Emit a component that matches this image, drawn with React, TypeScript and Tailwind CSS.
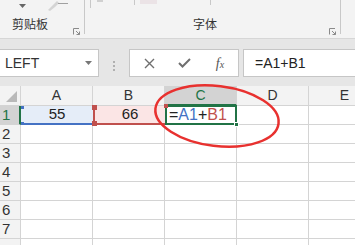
import React from "react";

const cols = ["A", "B", "C", "D", "E"];
const rows = [1, 2, 3, 4, 5, 6, 7, 8];

export default function App() {
  return (
    <div
      className="relative w-[355px] h-[245px] overflow-hidden bg-white"
      style={{ fontFamily: '"Liberation Sans", Arial, sans-serif' }}
    >
      {/* Ribbon */}
      <div className="relative flex h-[39px] bg-[#f3f3f3] border-b border-[#d6d6d6]">
        <div className="relative w-[85px] h-[34px] border-r border-[#c8c8c8] flex items-end pl-[12px] pb-[3px]">
          <span
            className="text-[12px] leading-[14px] text-[#333]"
            style={{ fontFamily: '"Noto Sans CJK SC", sans-serif' }}
          >
            剪贴板
          </span>
          <svg className="absolute left-[73px] top-[28px]" width="8" height="7" viewBox="0 0 8 7">
            <path d="M0.5 6.5V0.5H6" stroke="#8a8a8a" fill="none" />
            <path d="M3 3L6.5 6.5M6.5 3.5V6.5H3.5" stroke="#8a8a8a" fill="none" />
          </svg>
          <svg className="absolute left-[19px] top-[4px]" width="7" height="4" viewBox="0 0 7 4">
            <path d="M0 0H7L3.5 4Z" fill="#666" />
          </svg>
          <svg className="absolute left-[46px] top-[0px]" width="14" height="11" viewBox="0 0 14 11">
            <path d="M2 10L7 5L11 1L13 3L9 7L4 11Z" fill="#d4d4d4" />
          </svg>
        </div>
        <div className="relative w-[256px] h-[34px] border-r border-[#c8c8c8] flex items-end pl-[108px] pb-[3px]">
          <span
            className="text-[12px] leading-[14px] text-[#333]"
            style={{ fontFamily: '"Noto Sans CJK SC", sans-serif' }}
          >
            字体
          </span>
          <svg className="absolute left-[244px] top-[28px]" width="8" height="7" viewBox="0 0 8 7">
            <path d="M0.5 6.5V0.5H6" stroke="#8a8a8a" fill="none" />
            <path d="M3 3L6.5 6.5M6.5 3.5V6.5H3.5" stroke="#8a8a8a" fill="none" />
          </svg>
          <div className="absolute left-[-27px] top-0 w-[10px] h-[1px] bg-[#a0a0a0] mt-[3px]" />
          <div className="absolute left-[5px] top-0 w-[1px] h-[8px] bg-[#c8c8c8]" />
          <div className="absolute left-[49px] top-0 w-[1px] h-[5px] bg-[#c8c8c8]" />
          <div className="absolute left-[55px] top-0 w-[17px] h-[4px] bg-[#ebe3e6]" />
          <div className="absolute left-[125px] top-0 w-[1px] h-[5px] bg-[#c8c8c8]" />
          <div className="absolute left-[12px] top-0 w-[6px] h-[2px] bg-[#d0d0d0]" />
        </div>
      </div>

      {/* Formula bar */}
      <div className="flex h-[47px] bg-[#e6e6e6] pt-[10px]">
        <div className="relative w-[99px] h-[28px] bg-white border border-l-0 border-[#c6c6c6] flex items-center pl-[5px]">
          <span className="text-[14px] text-[#333]">LEFT</span>
          <svg className="absolute left-[85px] top-[11px]" width="7" height="4" viewBox="0 0 7 4">
            <path d="M0 0H7L3.5 4Z" fill="#777" />
          </svg>
        </div>
        <div className="w-[30px] flex flex-col items-center justify-center gap-[2px] pb-[4px]">
          <div className="w-[2px] h-[2px] bg-[#b0b0b0]" />
          <div className="w-[2px] h-[2px] bg-[#b0b0b0]" />
          <div className="w-[2px] h-[2px] bg-[#b0b0b0]" />
        </div>
        <div className="w-[110px] h-[28px] bg-white border border-[#c6c6c6] flex items-center">
          <div className="w-[36px] flex justify-center pl-[2px]">
            <svg width="11" height="11" viewBox="0 0 11 11">
              <path d="M1 1L10 10M10 1L1 10" stroke="#6f6f6f" strokeWidth="1.4" />
            </svg>
          </div>
          <div className="w-[36px] flex justify-center">
            <svg width="13" height="10" viewBox="0 0 13 10">
              <path d="M1 5L4.5 8.5L12 1" stroke="#6f6f6f" strokeWidth="2" fill="none" />
            </svg>
          </div>
          <div className="w-[36px] flex justify-center">
            <span
              className="italic text-[14px] text-[#555]"
              style={{ fontFamily: '"Liberation Serif", serif' }}
            >
              f<span className="text-[10px]">x</span>
            </span>
          </div>
        </div>
        <div className="ml-[4px] flex-1 h-[28px] bg-white border border-r-0 border-[#c6c6c6] flex items-center pl-[11px]">
          <span className="text-[14px] text-[#222]">=A1+B1</span>
        </div>
      </div>

      {/* Grid */}
      <div className="grid grid-cols-[21px_72px_72px_72px_72px_72px] grid-rows-[20px_repeat(8,19px)]">
        <div className="relative bg-[#f3f3f3] border-r border-b border-[#d4d4d4]">
          <svg className="absolute right-[3px] bottom-[3px]" width="11" height="11" viewBox="0 0 11 11">
            <path d="M11 0V11H0Z" fill="#b9b9b9" />
          </svg>
        </div>
        {cols.map((c) => (
          <div
            key={c}
            className={
              c === "C"
                ? "bg-[#d3d3d3] border-r border-[#d4d4d4] border-b-2 border-b-[#217346] flex items-center justify-center text-[14px] text-[#217346]"
                : "bg-[#f3f3f3] border-r border-b border-[#d4d4d4] flex items-center justify-center text-[14px] text-[#333]"
            }
          >
            {c}
          </div>
        ))}
        {rows.map((r) => (
          <React.Fragment key={r}>
            <div
              className={
                r === 1
                  ? "bg-[#d3d3d3] border-r-2 border-r-[#217346] border-b border-[#d4d4d4] flex items-center pl-[2px] text-[15px] text-[#217346]"
                  : "bg-[#f3f3f3] border-r border-b border-[#d4d4d4] flex items-center pl-[2px] text-[15px] text-[#333]"
              }
            >
              {r < 8 ? r : ""}
            </div>
            {cols.map((c) => {
              if (r === 1 && c === "A") {
                return (
                  <div
                    key={c}
                    className="relative bg-[#e5edf8] border-b-2 border-[#4472c4] flex items-center justify-center text-[15px] text-[#222]"
                  >
                    55
                    <div className="absolute left-0 bottom-[-2px] w-[3px] h-[3px] bg-[#4472c4]" />
                    <div className="absolute left-0 top-0 w-[3px] h-[3px] bg-[#4472c4]" />
                  </div>
                );
              }
              if (r === 1 && c === "B") {
                return (
                  <div
                    key={c}
                    className="relative bg-[#fbe5e5] border-l-2 border-b-2 border-[#c0504d] flex items-center justify-center text-[15px] text-[#222]"
                  >
                    66
                    <div className="absolute left-[-3px] top-[-1px] w-[5px] h-[5px] bg-[#c0504d]" />
                    <div className="absolute left-[-3px] bottom-[-3px] w-[5px] h-[5px] bg-[#c0504d]" />
                  </div>
                );
              }
              if (r === 1 && c === "C") {
                return (
                  <div
                    key={c}
                    className="relative border-2 border-[#217346] flex items-center pl-[2px] text-[16px] text-[#222] mt-[-1px]"
                  >
                    <span>=</span>
                    <span className="text-[#4472c4]">A1</span>
                    <span>+</span>
                    <span className="text-[#c0504d]">B1</span>
                    <div className="absolute right-[-4px] bottom-[-4px] w-[5px] h-[5px] bg-[#217346] border border-white" />
                    <div className="absolute left-[-3px] top-[-3px] w-[4px] h-[4px] bg-[#c0504d]" />
                  </div>
                );
              }
              return <div key={c} className="border-r border-b border-[#d4d4d4]" />;
            })}
          </React.Fragment>
        ))}
      </div>

      {/* Red ellipse annotation */}
      <svg className="absolute left-0 top-0 pointer-events-none" width="355" height="245" viewBox="0 0 355 245">
        <ellipse
          cx="217"
          cy="116"
          rx="62"
          ry="30"
          transform="rotate(7 217 116)"
          stroke="#e8312f"
          strokeWidth="2.5"
          fill="none"
        />
      </svg>
    </div>
  );
}
